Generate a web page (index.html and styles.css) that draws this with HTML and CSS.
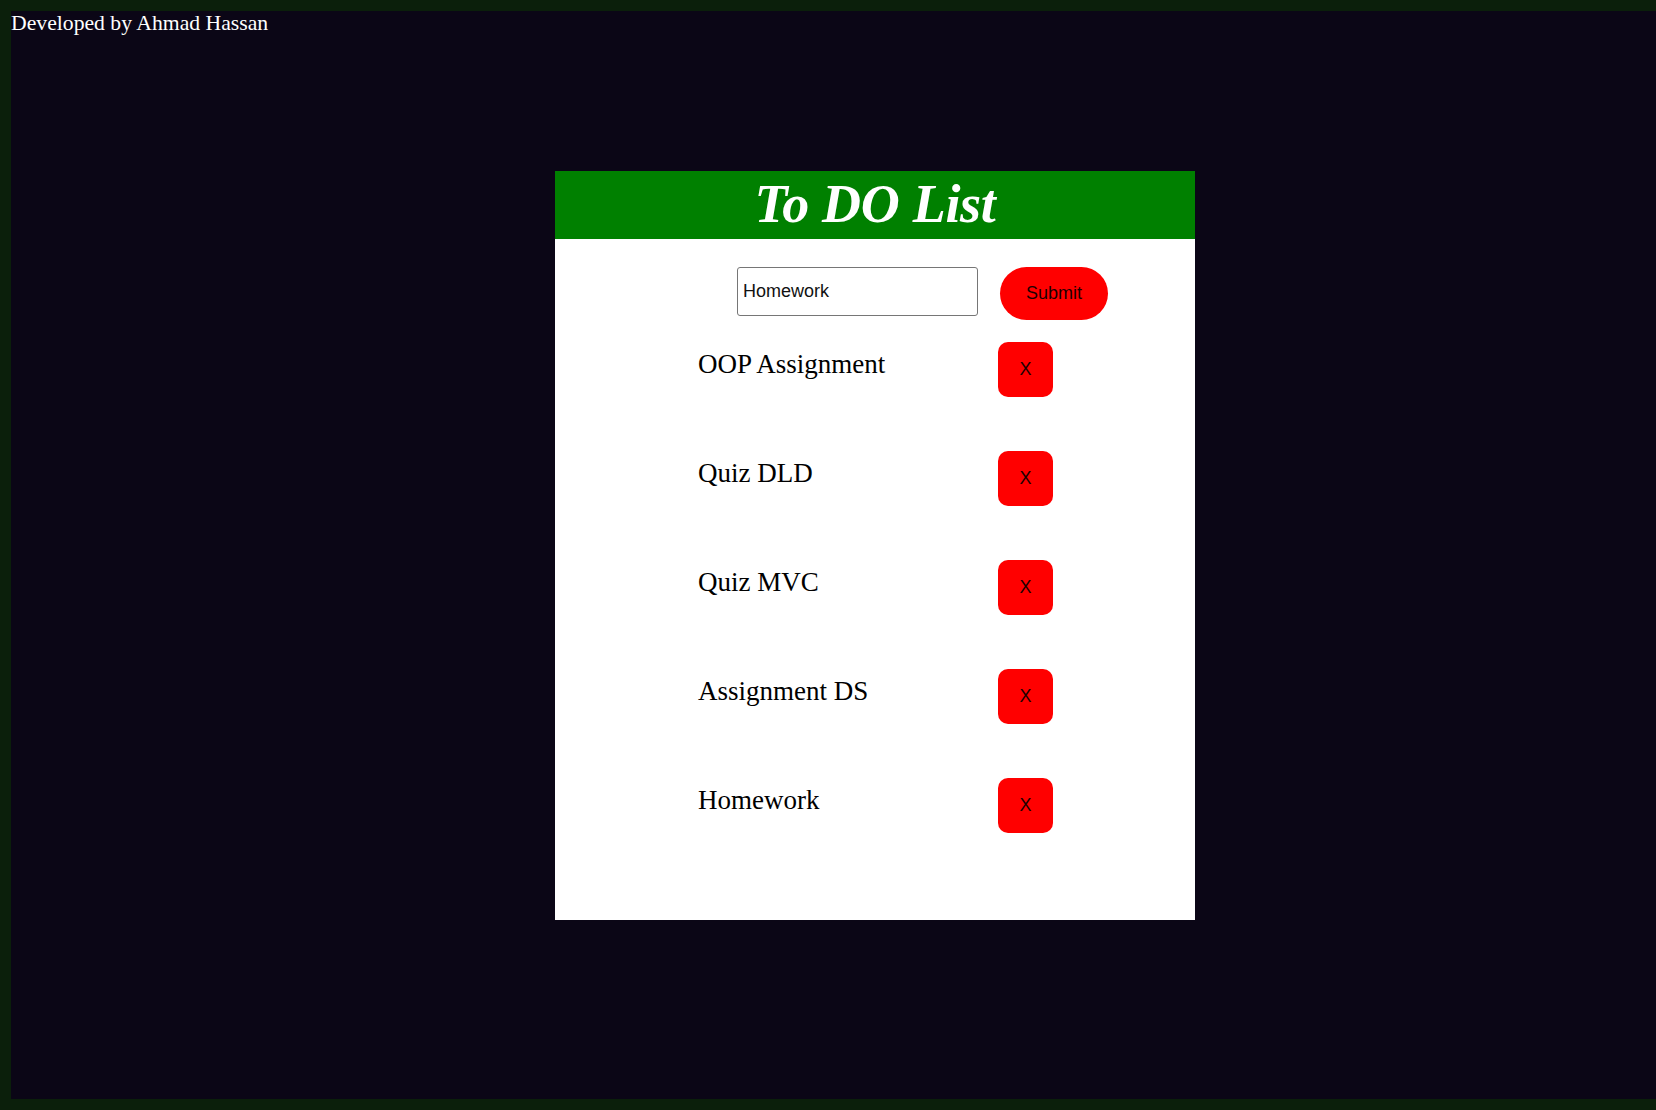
FILE: index.html
```html
<!DOCTYPE html>
<html>
<head>
<meta charset="utf-8">
<title>To DO List</title>
<link rel="stylesheet" href="styles.css">
</head>
<body>
<p class="credit">Developed by Ahmad Hassan</p>
<div class="card">
  <div class="card-head"><h1 class="title">To DO List</h1></div>
  <div class="form-row">
    <input class="task-input" type="text" value="Homework">
    <button class="submit-btn">Submit</button>
  </div>
  <ul class="tasks">
    <li class="task"><span class="task-text">OOP Assignment</span><button class="del-btn">X</button></li>
    <li class="task"><span class="task-text">Quiz DLD</span><button class="del-btn">X</button></li>
    <li class="task"><span class="task-text">Quiz MVC</span><button class="del-btn">X</button></li>
    <li class="task"><span class="task-text">Assignment DS</span><button class="del-btn">X</button></li>
    <li class="task"><span class="task-text">Homework</span><button class="del-btn">X</button></li>
  </ul>
</div>
</body>
</html>
```

FILE: styles.css
```css
html {
  background: #0b1f0b;
  height: 100%;
}
body {
  margin: 11px 0 11px 11px;
  height: calc(100% - 22px);
  background: #0b0616;
  font-family: "Liberation Serif", "Times New Roman", serif;
  overflow: hidden;
}
.credit {
  margin: 0;
  color: #ffffff;
  font-size: 21.7px;
  line-height: 24px;
}
.card {
  width: 640px;
  height: 749px;
  margin: 136px 0 0 544px;
  background: #ffffff;
}
.card-head {
  height: 68px;
  background: #008000;
  display: flex;
  align-items: center;
  justify-content: center;
}
.title {
  margin: 0;
  color: #ffffff;
  font-size: 54px;
  font-weight: bold;
  font-style: italic;
  line-height: 60px;
  padding-bottom: 3px;
  letter-spacing: -0.3px;
}
.form-row {
  display: flex;
  align-items: flex-start;
  gap: 22px;
  padding: 28px 0 0 182px;
}
.task-input {
  box-sizing: border-box;
  width: 241px;
  height: 49px;
  margin: 0;
  padding: 0 5px;
  border: 1px solid #767676;
  border-radius: 3px;
  font-family: "Liberation Sans", Arial, sans-serif;
  font-size: 18px;
  color: #111;
}
.submit-btn {
  box-sizing: border-box;
  width: 108px;
  height: 53px;
  margin: 0;
  border: none;
  border-radius: 27px;
  background: #ff0000;
  color: #1a0000;
  font-family: "Liberation Sans", Arial, sans-serif;
  font-size: 18px;
  padding: 0;
}
.tasks {
  list-style: none;
  margin: 22px 0 0;
  padding: 0 0 0 143px;
}
.task {
  display: flex;
  align-items: flex-start;
  height: 109px;
}
.task-text {
  width: 300px;
  margin-top: 7px;
  font-size: 27px;
  line-height: 31px;
  color: #000;
}
.del-btn {
  box-sizing: border-box;
  width: 55px;
  height: 55px;
  margin: 0;
  padding: 0;
  border: none;
  border-radius: 10px;
  background: #ff0000;
  color: #1a0000;
  font-family: "Liberation Sans", Arial, sans-serif;
  font-size: 18px;
}
```
